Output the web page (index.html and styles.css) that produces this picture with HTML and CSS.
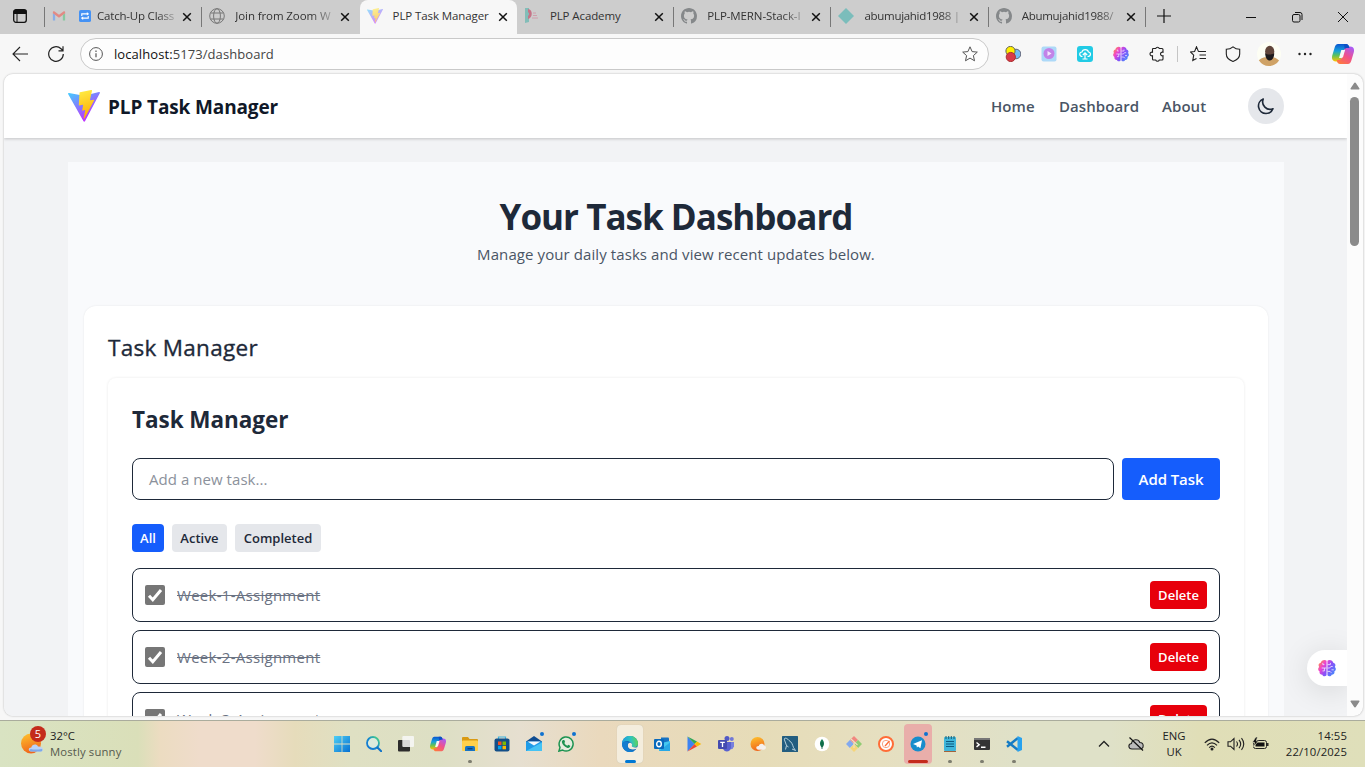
FILE: index.html
```html
<!DOCTYPE html>
<html lang="en">
<head>
<meta charset="utf-8">
<title>PLP Task Manager</title>
<link rel="stylesheet" href="styles.css">
</head>
<body>
<svg class="defs" aria-hidden="true">
  <defs>
    <linearGradient id="viteA" x1="0" y1="0" x2="0.6" y2="0.9"><stop offset="0" stop-color="#41d1ff"/><stop offset="1" stop-color="#bd34fe"/></linearGradient>
    <linearGradient id="viteB" x1="0.4" y1="0" x2="0.6" y2="1"><stop offset="0" stop-color="#ffea40"/><stop offset="0.2" stop-color="#ffdd35"/><stop offset="1" stop-color="#ffa800"/></linearGradient>
    <linearGradient id="brainG" gradientUnits="userSpaceOnUse" x1="1" y1="2" x2="15" y2="12"><stop offset="0" stop-color="#ff9147"/><stop offset="0.3" stop-color="#ee42cf"/><stop offset="0.6" stop-color="#8a50f8"/><stop offset="1" stop-color="#4a86fb"/></linearGradient>
    <linearGradient id="copA" x1="0.4" y1="0" x2="0.4" y2="1"><stop offset="0" stop-color="#0a55d0"/><stop offset="0.4" stop-color="#16a2dc"/><stop offset="0.65" stop-color="#5cc25c"/><stop offset="1" stop-color="#ffc400"/></linearGradient>
    <linearGradient id="copB" x1="0.8" y1="0" x2="0.2" y2="1"><stop offset="0" stop-color="#a85cf8"/><stop offset="0.5" stop-color="#f0508c"/><stop offset="1" stop-color="#ff7a3c"/></linearGradient>
    <linearGradient id="edgeA" x1="0" y1="0.4" x2="1" y2="0.3"><stop offset="0" stop-color="#1b9de2"/><stop offset="0.55" stop-color="#2fc2c0"/><stop offset="1" stop-color="#62d650"/></linearGradient>
    <linearGradient id="winG" x1="0" y1="0" x2="1" y2="1"><stop offset="0" stop-color="#4fd0f5"/><stop offset="1" stop-color="#0670d2"/></linearGradient>
    <linearGradient id="sunG" x1="0" y1="0" x2="0.3" y2="1"><stop offset="0" stop-color="#ffc52e"/><stop offset="1" stop-color="#f0681c"/></linearGradient>
    <linearGradient id="seaG" x1="0" y1="1" x2="1" y2="0"><stop offset="0" stop-color="#1173d4"/><stop offset="0.5" stop-color="#1489cf"/><stop offset="1" stop-color="#54dc7c"/></linearGradient>
    <symbol id="vite" viewBox="0 0 32 32"><path d="M31.9 3.1 17 31.2c-.3.6-1.200.6-1.500 0L.1 4.100c-.4-.6.2-1.300.9-1.200L16 5.700 31 2.100c.7-.1 1.200.5.9 1z" fill="url(#viteA)"/><path d="M23.200.1 11.900 2.300a.5.5 0 0 0-.4.4l-.7 12.400c0 .3.300.5.600.4l3.200-.7c.3-.1.600.2.500.5l-.9 4.900c-.1.300.200.600.5.500l2-.6c.3-.1.600.2.500.5l-1.500 7.500c-.1.500.5.700.8.400L26.200 10.300c.2-.3-.1-.7-.4-.6l-3.300.6c-.3.100-.6-.2-.5-.5L24 .7c.1-.3-.4-.7-.8-.6z" fill="url(#viteB)"/></symbol>
    <symbol id="github" viewBox="0 0 16 16"><path fill="#85888a" d="M8 0C3.580 0 0 3.580 0 8c0 3.540 2.290 6.530 5.470 7.590.4.070.550-.170.550-.380v-1.490c-2.230.480-2.700-.950-2.700-.950-.360-.920-.890-1.170-.890-1.170-.730-.500.060-.490.060-.490.800.060 1.230.830 1.230.830.720 1.210 1.870.870 2.330.660.070-.520.280-.870.510-1.070-1.780-.200-3.640-.890-3.640-3.950 0-.870.310-1.590.820-2.150-.080-.200-.360-1.020.080-2.120 0 0 .670-.210 2.200.820a7.700 7.700 0 0 1 4 0c1.530-1.040 2.200-.820 2.200-.820.440 1.100.160 1.920.080 2.120.510.560.820 1.270.820 2.150 0 3.070-1.870 3.750-3.650 3.950.290.250.540.730.540 1.480v2.200c0 .210.150.460.550.380A8 8 0 0 0 16 8c0-4.420-3.580-8-8-8z"/></symbol>
    <symbol id="close" viewBox="0 0 10 10"><path d="M1.200 1.200 8.800 8.800M8.800 1.200 1.200 8.800" stroke="#111" stroke-width="1.500" fill="none"/></symbol>
    <symbol id="brain" viewBox="0 0 16 16"><path fill="url(#brainG)" d="M7.600 1.500v13c-1.300 1.400-3.300.900-3.700-.6C2 14 .9 12.500 1.500 11-.1 10.200-.3 8 1 7-.1 5.500.8 3.700 2.500 3.400 2.600 1.200 6 0 7.600 1.500zM8.400 1.500v13c1.300 1.400 3.300.9 3.700-.6 1.900.1 3-1.400 2.400-2.900 1.600-.8 1.800-3 .5-4 1.100-1.500.2-3.300-1.500-3.600C13.400 1.200 10 0 8.400 1.500z"/><path d="M7.600 8H3.300M5.700 8v2.600H4M5.700 5H4.300V3.500M8.400 5H11V3.500M8.400 11h2.300l1.200 1.300M8.400 8h2l1-1.300h1.700M12 9.600h2" stroke="#ecdcff" stroke-width=".8" fill="none"/></symbol>
    <symbol id="copilot" viewBox="0 0 22 20"><path fill="url(#copA)" d="M6 0h8c1.600 0 2.500.9 3 2.500l.5 1.500h-2.200c-2 0-2.900 1-3.500 3L9.300 15c-.5 1.600-1.600 2.500-3.200 2.500H4c-3.500 0-4.800-2.500-3.600-6.500L2.500 4C3.200 1.500 4.300 0 6 0z"/><path fill="url(#copB)" d="M16 20H8c-1.600 0-2.500-.9-3-2.500L4.700 16h1.800c2 0 2.900-1 3.500-3l2.500-8c.5-1.600 1.600-2.500 3.200-2.500H18c3.500 0 4.800 2.500 3.600 6.500L19.500 16c-.7 2.500-1.800 4-3.500 4z"/><path fill="#0d4fc4" d="M12 0h2c1.600 0 2.500.9 3 2.500L17.500 4h-2.200c-1.200 0-2 .5-2.600 1.300z"/><path fill="#f7f7f7" d="M9.300 6h3.800l-1.900 6.500q-.5 1.500-2 1.500H7z"/></symbol>
  </defs>
</svg>

<div class="browser">
  <div class="tabstrip">
    <div class="workspaces"><svg width="14" height="14" viewBox="0 0 14 14"><rect x=".7" y=".7" width="12.600" height="12.600" rx="2.200" fill="none" stroke="#111" stroke-width="1.300"/><path d="M1 1.500h12v3H1zM4 4v9" fill="#111" stroke="#111"/></svg></div>
    <div class="tab first">
      <svg class="fav" viewBox="0 0 16 16"><path d="M1 13V4.500l2.600 2V13z" fill="#88aee8"/><path d="M15 13V4.500l-2.600 2V13z" fill="#87c8a0"/><path d="M1 4.800V3.600C1 2.500 2.300 2.200 3 2.800l5 3.800 5-3.800c.8-.6 2-.2 2 .8v1.200L8 10z" fill="#e28a84"/></svg>
      <svg class="fav blue" viewBox="0 0 13 13"><rect width="13" height="13" rx="2" fill="#4592f4"/><path d="M3 6.500V4.200h6.500M10 6.500v2.300H3.500" fill="none" stroke="#fff" stroke-width="1.200"/><path d="M8.500 2.300 11 4.200 8.500 6zM4.500 7 2 8.800l2.500 1.900z" fill="#fff"/></svg>
      <span class="title fade">Catch-Up Class</span><svg class="x"><use href="#close"/></svg>
    </div>
    <div class="tab">
      <svg class="fav" viewBox="0 0 16 16"><g fill="none" stroke="#777"><circle cx="8" cy="8" r="7.300"/><ellipse cx="8" cy="8" rx="3.400" ry="7.300"/><path d="M1.500 5h13M1.500 11h13"/></g></svg>
      <span class="title fade">Join from Zoom W</span><svg class="x"><use href="#close"/></svg>
    </div>
    <div class="tab active">
      <svg class="fav dim" viewBox="0 0 16 16"><use href="#vite"/></svg>
      <span class="title">PLP Task Manager</span><svg class="x"><use href="#close"/></svg>
    </div>
    <div class="tab">
      <svg class="fav" viewBox="0 0 16 16"><path d="M1 0h4v14l-4 1z" fill="#82bdb8"/><path d="M4 1c5 0 5 9 0 10V8c1.500-1 1.500-3 0-4z" fill="#c67387"/><path d="M9 5h3M9 7.500h4M8 10h6" stroke="#cf9eac" stroke-width="1"/></svg>
      <span class="title">PLP Academy</span><svg class="x"><use href="#close"/></svg>
    </div>
    <div class="tab">
      <svg class="fav"><use href="#github"/></svg>
      <span class="title fade">PLP-MERN-Stack-I</span><svg class="x"><use href="#close"/></svg>
    </div>
    <div class="tab">
      <svg class="fav" viewBox="0 0 16 16"><path d="m8 0 8 8-8 8-8-8z" fill="#7bbdbb"/></svg>
      <span class="title fade snug">abumujahid1988 |</span><svg class="x"><use href="#close"/></svg>
    </div>
    <div class="tab">
      <svg class="fav"><use href="#github"/></svg>
      <span class="title fade snug">Abumujahid1988/</span><svg class="x"><use href="#close"/></svg>
    </div>
    <div class="tabend"></div>
    <svg class="newtab" viewBox="0 0 14 14"><path d="M7 0v14M0 7h14" stroke="#111" stroke-width="1.200"/></svg>
    <div class="winctl">
      <svg viewBox="0 0 12 12"><path d="M1 6.500h10" stroke="#111"/></svg>
      <svg viewBox="0 0 12 12"><rect x="1.500" y="3.500" width="7.500" height="7.500" rx="1.500" fill="none" stroke="#111"/><path d="M4 1.500h5q2 0 2 2V9" fill="none" stroke="#111"/></svg>
      <svg viewBox="0 0 12 12"><path d="m1 1 10 10M11 1 1 11" stroke="#111"/></svg>
    </div>
  </div>

  <div class="toolbar">
    <svg class="back" viewBox="0 0 16 16"><path d="M16 8H1M8 1 1 8l7 7" fill="none" stroke="#222" stroke-width="1.100"/></svg>
    <svg class="reload" viewBox="0 0 16 16"><path d="M15.300 8A7.300 7.300 0 1 1 13 2.700l2 1.800M15 .3v4.500h-4.500" fill="none" stroke="#222" stroke-width="1.200"/></svg>
    <div class="address">
      <svg class="info" viewBox="0 0 14 14"><circle cx="7" cy="7" r="6.400" fill="none" stroke="#555"/><path d="M7 6.200v4M7 3.600V5" stroke="#555" stroke-width="1.200"/></svg>
      <span class="url"><b>localhost:</b>5173/dashboard</span>
      <svg class="star" viewBox="0 0 16 16"><path d="m8 .8 2.100 4.800 5.200.5-3.900 3.500 1.100 5.200L8 12.100l-4.500 2.700 1.100-5.200L.7 6.100l5.200-.5z" fill="none" stroke="#555" stroke-linejoin="round"/></svg>
    </div>
    <div class="exts">
      <svg viewBox="0 0 16 16"><circle cx="11" cy="8" r="4.800" fill="#72bdf5" stroke="#667"/><circle cx="5.500" cy="5" r="4.600" fill="#ffee00" stroke="#665"/><circle cx="5.800" cy="11" r="4.600" fill="#d83a48" stroke="#a33"/></svg>
      <svg viewBox="0 0 16 16"><rect x=".5" y=".5" width="15" height="15" rx="2" fill="#add9f8"/><circle cx="8" cy="7.500" r="5.500" fill="#c283e8"/><path d="m6.500 5 4 2.500-4 2.500z" fill="#f4e6ff"/></svg>
      <svg viewBox="0 0 16 16"><rect width="16" height="16" rx="3" fill="#22cbe5"/><path d="M5.500 10.500C1.800 10.500 2 6 5 6c.5-3.300 6-3.300 6.400 0 3 .2 2.800 4.500-.9 4.500M8 13V6.800M5.800 9 8 6.800 10.200 9M5.500 13h5" fill="none" stroke="#fff" stroke-width="1.200"/></svg>
      <svg><use href="#brain"/></svg>
      <svg viewBox="0 0 16 16"><path d="M4 2.500h2.700a1.900 1.900 0 0 1 3.600 0H13q1 0 1 1v2.700a1.900 1.900 0 1 0 0 3.600V13q0 1-1 1h-2.700a1.900 1.900 0 0 1-3.600 0H4.500q-1 0-1-1V9.800a1.900 1.900 0 1 1 0-3.600V3z" fill="none" stroke="#222" stroke-width="1.100"/></svg>
    </div>
    <i class="divider"></i>
    <div class="tools">
      <svg viewBox="0 0 16 16"><path d="M8.500 5.600 6.500.8 4.600 5.500.5 5.900l3.200 3.300-.9 5.200 3.700-2M8.500 5.500H16M9.500 9H16M9.500 12.500H16" fill="none" stroke="#222" stroke-width="1.100"/></svg>
      <svg viewBox="0 0 16 16"><path d="M8 .8C6 2.500 3.700 3.200 1.300 3.200V8c0 3.500 2.700 6 6.700 7.400 4-1.400 6.700-3.900 6.700-7.400V3.200C12.300 3.200 10 2.500 8 .8z" fill="none" stroke="#222" stroke-width="1.100"/></svg>
      <svg class="avatar" viewBox="0 0 24 24"><circle cx="12" cy="12" r="12" fill="#fdfef4"/><path d="M1.800 18.300C5 15.500 8 15 12.500 15s7 1 9.600 3.500a12 12 0 0 1-20.300-.2z" fill="#cfa266"/><ellipse cx="12.700" cy="9.500" rx="4.600" ry="5.800" fill="#60453a"/><path d="M8.200 11c1 2 8 2 9 0 0 10-9 10-9 0z" fill="#1e1b1c"/></svg>
      <svg viewBox="0 0 16 16"><g fill="#222"><circle cx="2.500" cy="8" r="1.200"/><circle cx="8" cy="8" r="1.200"/><circle cx="13.500" cy="8" r="1.200"/></g></svg>
      <svg class="cop"><use href="#copilot"/></svg>
    </div>
  </div>

  <div class="viewport">
    <div class="page">
      <header class="nav">
        <div class="brand"><svg class="logo"><use href="#vite"/></svg><span class="brandname">PLP Task Manager</span></div>
        <nav class="links"><a class="l1">Home</a><a class="l2">Dashboard</a><a class="l3">About</a>
          <button class="theme"><svg viewBox="0 0 24 24"><path d="M20.350 15.350A9 9 0 0 1 8.650 3.650 9 9 0 0 0 12 21a9 9 0 0 0 8.350-5.650z" fill="none" stroke="#1e2939" stroke-width="2" stroke-linejoin="round"/></svg></button></nav>
      </header>
      <main class="panel">
        <h1>Your Task Dashboard</h1>
        <p class="lead">Manage your daily tasks and view recent updates below.</p>
        <section class="card">
          <h2>Task Manager</h2>
          <div class="inner">
            <h3>Task Manager</h3>
            <div class="addrow"><div class="field"><span>Add a new task...</span></div><button class="add"><span>Add Task</span></button></div>
            <div class="filters"><button class="on f1">All</button><button class="f2">Active</button><button class="f3">Completed</button></div>
            <ul class="tasks">
              <li><i class="check"><svg viewBox="0 0 20 20"><path d="m4 10.700 3.800 4L16 5" fill="none" stroke="#fff" stroke-width="3"/></svg></i><s>Week-1-Assignment</s><button class="del">Delete</button></li>
              <li><i class="check"><svg viewBox="0 0 20 20"><path d="m4 10.700 3.800 4L16 5" fill="none" stroke="#fff" stroke-width="3"/></svg></i><s>Week-2-Assignment</s><button class="del">Delete</button></li>
              <li><i class="check"><svg viewBox="0 0 20 20"><path d="m4 10.700 3.800 4L16 5" fill="none" stroke="#fff" stroke-width="3"/></svg></i><s>Week-3-Assignment</s><button class="del">Delete</button></li>
            </ul>
          </div>
        </section>
      </main>
      <div class="float"><svg><use href="#brain"/></svg></div>
    </div>
    <div class="scrollbar">
      <svg viewBox="0 0 10 8"><path d="M5 .5q.6 0 1 .7L9.500 6.500q.2 1-.8 1H1.300q-1 0-.8-1L4 1.200q.4-.7 1-.7z" fill="#8b8b8b"/></svg>
      <i class="thumb"></i>
      <svg class="down" viewBox="0 0 10 8"><path d="M5 7.500q.6 0 1-.7L9.500 1.500q.2-1-.8-1H1.300q-1 0-.8 1L4 6.800q.4.700 1 .7z" fill="#8b8b8b"/></svg>
    </div>
  </div>
</div>

<div class="taskbar">
  <div class="weather">
    <div class="sun"><svg viewBox="0 0 24 22"><circle cx="10" cy="10.500" r="10" fill="url(#sunG)"/><path d="M10 18.500c-3-.3-3-4 .3-4 .5-3.500 5.500-4 6.700-1 5-1 6.500 4.500 3 5z" fill="#b9d2f8"/><path d="M10 18.500c-2-.3-2-2 0-2.500 3 1 7 .5 11 0 .8 1.200.2 2.300-1 2.500z" fill="#7ea9ea"/></svg><b class="count">5</b></div>
    <div class="wtext"><span class="temp">32°C</span><span class="cond">Mostly sunny</span></div>
  </div>
  <div class="apps">
    <div class="app"><svg viewBox="0 0 16 16"><path d="M0 0h7.600v7.600H0zM8.400 0H16v7.600H8.400zM0 8.400h7.600V16H0zM8.400 8.400H16V16H8.400z" fill="url(#winG)"/></svg></div>
    <div class="app"><svg viewBox="0 0 16 16"><circle cx="7" cy="7" r="6" fill="#dcebdc" stroke="url(#seaG)" stroke-width="1.800"/><path d="m11.500 11.500 3.700 3.700" stroke="#1173c8" stroke-width="2" stroke-linecap="round"/></svg></div>
    <div class="app"><svg viewBox="0 0 16 16"><rect x="0" y="4" width="12" height="11.500" rx="1" fill="#2c2c2c"/><rect x="4.300" y="0" width="11.700" height="11" rx="1" fill="#f8f8f8" opacity=".85"/></svg></div>
    <div class="app"><svg><use href="#copilot"/></svg></div>
    <div class="app run"><svg viewBox="0 0 16 16"><path d="M0 2q0-1 1-1h5l1.500 2H15q1 0 1 1v3H0z" fill="#d99a12"/><rect y="4.500" width="16" height="10.500" rx="1" fill="#ffd04c"/><path d="M3 15v-3.500q0-1.500 1.500-1.500h7q1.500 0 1.500 1.500V15z" fill="#1673c4"/><path d="M5.500 12.700h5" stroke="#0a3f7e" stroke-width="1.200"/></svg></div>
    <div class="app"><svg viewBox="0 0 16 16"><path d="M4.500 3V1h7v2" fill="none" stroke="#3ab2df" stroke-width="1.200"/><rect x=".5" y="2.500" width="15" height="13" rx="2" fill="#134f88"/><path d="M4 5.500h3.500V9H4z" fill="#f25022"/><path d="M8.500 5.500H12V9H8.500z" fill="#7fba00"/><path d="M4 9.800h3.500v3.500H4z" fill="#00a4ef"/><path d="M8.500 9.800H12v3.500H8.500z" fill="#ffb900"/></svg></div>
    <div class="app dot"><svg viewBox="0 0 16 16"><path d="M0 5.500 8 0l8 5.500v1H0z" fill="#0e4c91"/><path d="M0 5.500h16V15H0z" fill="#1e9be8"/><path d="M1.500 5.500h13L8 9.500z" fill="#f2f8fd"/><path d="M0 15 16 6.500V15z" fill="#45c3f4"/></svg></div>
    <div class="app dot"><svg viewBox="0 0 16 16"><path d="M.9 15.100 2 11.400a7 7 0 1 1 2.700 2.700z" fill="#e4ecdd" stroke="#1c9351" stroke-width="1.500"/><path d="M5 3.900 6.300 4l.8 2-.8 1q1 2 3 2.800l1-1 1.900 1c.2 2-1.800 2.400-3.200 1.900C6.500 10.800 4.400 8.700 3.900 6.200c-.1-1 .3-1.900 1.100-2.300z" fill="#1c9351"/></svg></div>
    <div class="app"></div>
    <div class="app current"><svg viewBox="0 0 16 16"><circle cx="8" cy="8" r="8" fill="#1368b8"/><path d="M0 8a8 8 0 0 1 16-.5c0 3-2.500 4.200-5.200 3.500-1.700-.5-1-1.200-.7-2.200C10.500 6 3 2.500 0 8z" fill="url(#edgeA)"/><path d="M6.300 7.500c-2 4 2 7.500 8.500 5.200q1-1 1-2c-2 1.300-4 .8-5 .3-1.700-.8-.6-1.500-.7-2.500-.3-2-3-2.500-3.800-1z" fill="#f1ebdc"/><path d="M6 7.500c-1.700 4.500 2 7.500 6.800 7A8 8 0 0 1 0 8c1.500-3.500 4.800-3 7-1.300z" fill="#137dd0"/></svg></div>
    <div class="app"><svg viewBox="0 0 16 16"><path d="M7 1.500h7q1 0 1 1V9H7z" fill="#1773c4"/><path d="M5 7.500 16 5v9q0 1-1 1H5z" fill="#43c8f1"/><path d="m5 15 11-8.500V15z" fill="#28a8e6"/><rect y="3" width="10" height="10" rx="1" fill="#0869bc"/><ellipse cx="5" cy="8" rx="2.300" ry="2.700" fill="none" stroke="#fff" stroke-width="1.400"/></svg></div>
    <div class="app"><svg viewBox="0 0 16 16"><path d="M1.500.5 8.500 8l-7 7.500z" fill="#3e83f1"/><path d="m1.500.5 9.500 5L8.500 8z" fill="#2ea657"/><path d="m1.500 15.500 9.500-5L8.500 8z" fill="#ec4539"/><path d="M11 5.500 15.300 8 11 10.500 8.500 8z" fill="#fbbb05"/></svg></div>
    <div class="app"><svg viewBox="0 0 16 16"><circle cx="13.800" cy="3" r="2" fill="#7178d6"/><circle cx="9" cy="2.500" r="2.500" fill="#5159c5"/><path d="M11 6h5v4.500q-1 3.500-5 2.500z" fill="#7780dd"/><path d="M5 6h8v5.500c-.5 5-7 5-8 1z" fill="#5961cf"/><rect y="4" width="9" height="9" rx="1" fill="#444bb0"/><path d="M2.200 6.300h4.600M4.500 6.300V11" stroke="#fff" stroke-width="1.300"/></svg></div>
    <div class="app"><svg viewBox="0 0 16 16"><circle cx="7.500" cy="8" r="7" fill="url(#sunG)"/><path d="M8.500 13.800c-3-.3-3-4 .3-3.800.7-3 4.700-2.800 5.200-.5 2.800.2 2.500 4.300-.5 4.300z" fill="#f4f0ee"/></svg></div>
    <div class="app"><svg viewBox="0 0 16 16"><rect width="16" height="16" rx=".5" fill="#225d80"/><path d="m3.500 13.500 1-4-2-5.500C1.500 1.500 5 1.500 7 4.500c3 1.500 3.500 4.500 4.500 7l2 3-3.500-1.500M4.500 9.500l2 1.500" fill="none" stroke="#c6dce7" stroke-width=".9"/></svg></div>
    <div class="app"><svg viewBox="0 0 16 16"><circle cx="8" cy="8" r="7.300" fill="#fff"/><path d="M8 3c2.700 3.200 2.700 6.300 0 8.500-2.700-2.200-2.700-5.300 0-8.500z" fill="#147850"/><path d="M8 6v7" stroke="#0d5840" stroke-width=".8"/></svg></div>
    <div class="app"><svg viewBox="0 0 16 16"><path d="m3.900 4.100 4.100-4.100 4 4-4 4z" fill="#f18780"/><path d="M0 8l3.900-3.900L7.800 8l-3.900 3.900z" fill="#82a9ef"/><path d="m8.200 8 3.900-3.900L16 8l-3.900 3.900z" fill="#90cb73"/><path d="m4.100 12 3.900-3.800 4 3.900L8 16z" fill="#f6d579"/><path d="m5 3 6.500 6M8 5.500V12" stroke="#eee0c3" stroke-width="1.100"/></svg></div>
    <div class="app"><svg viewBox="0 0 16 16"><circle cx="8" cy="8" r="7" fill="#fff" stroke="#ff6c37" stroke-width="2"/><circle cx="8" cy="8" r="3.700" fill="none" stroke="#f7a184" stroke-width="1"/><path d="m6.500 9.500 4.500-5 1 1-4.500 5z" fill="#ff6c37"/></svg></div>
    <div class="app alert dot"><svg viewBox="0 0 16 16"><circle cx="8" cy="8" r="7.500" fill="#188dcc"/><path d="m3 8 9-3.700-1.600 7.900-2.300-1.800-1.200 1.200-.3-2.200z" fill="#fff"/></svg></div>
    <div class="app run"><svg viewBox="0 0 16 16"><rect x="2" y="1" width="12" height="14" rx="1" fill="#3fb6da"/><path d="M4 5.500h8M4 8h8M4 10.500h8" stroke="#0d5b81"/><path d="M4 0v3M6.700 0v3M9.300 0v3M12 0v3" stroke="#195e73"/><path d="M2 15.500h12" stroke="#a3633b"/></svg></div>
    <div class="app run"><svg viewBox="0 0 16 16"><rect y="2" width="16" height="12" rx="1" fill="#343434"/><path d="M0 2h16v2H0z" fill="#777"/><path d="m2.500 6.500 2.700 2.200-2.700 2.200M7 11.300h4.500" fill="none" stroke="#fff" stroke-width="1.400"/></svg></div>
    <div class="app run"><svg viewBox="0 0 16 16"><path d="M1 5.200 12 14M1 10.800 12 2" stroke="#147bc4" stroke-width="2.500"/><path d="M11.500 0 16 2v12l-4.500 2z" fill="#27a2ef"/></svg></div>
  </div>
  <div class="tray">
    <svg class="chev" viewBox="0 0 12 8"><path d="m1 6.500 5-5 5 5" fill="none" stroke="#222" stroke-width="1.300"/></svg>
    <svg class="cloud" viewBox="0 0 16 14"><path d="M4 12C.2 12-.3 7 3.500 6.500 4 2 10.500 1.500 11.800 5.500c4.500 0 4.500 6.500 0 6.500z" fill="#bbb" stroke="#222" stroke-width="1.100"/><path d="m1.500.5 13.500 13" stroke="#111" stroke-width="1.200"/></svg>
    <div class="lang">ENG<br>UK</div>
    <svg class="wifi" viewBox="0 0 16 14"><g fill="none" stroke="#222" stroke-width="1.200"><path d="M.8 5.800q7.200-7.500 14.400 0M3 8.300q5-5 10 0M5.200 10.600q2.800-3 5.600 0"/></g><circle cx="8" cy="12" r="1.500" fill="#222"/></svg>
    <svg class="sound" viewBox="0 0 18 14"><g fill="none" stroke="#222" stroke-width="1.100"><path d="M1 4.800h2.500L7 1.500v11L3.500 9.200H1zM9.500 4.500q2 2.500 0 5M12 2.800q3.400 4.200 0 8.400M14.500 1.200q4.500 5.800 0 11.600"/></g></svg>
    <svg class="battery" viewBox="0 0 17 14"><rect x="1.500" y="3.500" width="13" height="8" rx="2" fill="none" stroke="#222"/><rect x="3.500" y="5.500" width="9" height="4" fill="#111"/><path d="M15.800 6v3" stroke="#111" stroke-width="1.300"/><path d="M3.800 0 .3 5.500h2.200L1.500 9.500 6.500 4H4.300L5.500 0z" fill="#111" stroke="#dfdfbf" stroke-width=".7"/></svg>
    <div class="clock"><span class="time">14:55</span><span class="date">22/10/2025</span></div>
  </div>
</div>
</body>
</html>
```
FILE: styles.css
```css
* { box-sizing: border-box; }
body { margin: 0; width: 1365px; height: 767px; overflow: hidden; background: #f7f7f7; font-family: "Open Sans", "Noto Sans", sans-serif; font-size: 15px; color: #1e2939; display: flex; flex-direction: column; }
button { font: inherit; border: 0; padding: 0; color: inherit; white-space: nowrap; }
svg { display: block; flex: none; }
.defs { position: absolute; width: 0; height: 0; }
.browser { height: 720px; display: flex; flex-direction: column; }

.tabstrip { height: 34px; flex: none; display: flex; align-items: center; background: #cdcdcd; }
.workspaces { width: 44px; padding: 0 0 2px 13px; }
.tab { width: 157.300px; height: 34px; flex: none; display: flex; align-items: center; padding: 0 9px 2px 8px; position: relative; }
.tab::before, .tabend { content: ""; position: absolute; left: 0; top: 7px; width: 1px; height: 20px; background: #777; }
.tabend { position: static; margin-bottom: 0; }
.tab.active::before, .tab.active + .tab::before { display: none; }
.tab.active { background: #f7f7f7; border-radius: 8px 8px 0 0; z-index: 1; margin: 0 -1px 0 1px; padding-left: 7px; }
.fav { width: 16px; height: 16px; margin-right: 10px; }
.tab.first .fav { width: 14px; height: 14px; margin: 0 13px 0 0; }
.tab.first .fav.blue { width: 12px; height: 12px; margin: 0 6px 0 0; }
.dim { opacity: .55; }
.title { flex: 1; min-width: 0; white-space: nowrap; font-size: 11.500px; letter-spacing: -.1px; color: #333; line-height: 16px; }
.snug { letter-spacing: -.3px; }
.first .title { letter-spacing: -.2px; }
.fade { -webkit-mask-image: linear-gradient(to right, #000 76%, transparent 104%); mask-image: linear-gradient(to right, #000 76%, transparent 104%); }
.x { width: 10px; height: 10px; margin-left: 5px; position: relative; top: 1px; }
.newtab { width: 14px; height: 14px; margin: 0 0 3px 11px; }
.winctl { margin-left: auto; display: flex; gap: 34px; padding-right: 16px; }
.winctl svg { width: 12px; height: 12px; }

.toolbar { height: 40px; flex: none; display: flex; align-items: center; padding: 0 9px 0 12px; }
.back, .reload { width: 16px; height: 16px; }
.reload { margin-left: 20px; }
.address { width: 909px; height: 32px; margin-left: 16px; border: 1px solid #c9c9c9; border-radius: 16px; background: #fdfdfd; display: flex; align-items: center; padding: 0 10px 0 8px; }
.info { width: 14px; height: 14px; margin-right: 11px; }
.url { flex: 1; font-size: 13px; color: #444; letter-spacing: .08px; }
.url b { font-weight: 400; color: #111; }
.star { width: 16px; height: 16px; }
.exts { display: flex; gap: 20px; margin-left: 16px; }
.exts svg { width: 16px; height: 16px; }
.divider { width: 1px; height: 16px; background: #c5c5c5; margin: 0 12px 0 12px; }
.tools { display: flex; align-items: center; gap: 20px; margin-left: 0; }
.tools svg { width: 16px; height: 16px; }
.tools svg:nth-child(2) { margin-left: -1px; }
.tools .avatar { width: 24px; height: 24px; margin: 0 -4px 0 -4px; }
.tools .cop { width: 22px; height: 20px; margin-left: -1px; }

.viewport { height: 642px; flex: none; margin: 0 2px 0 4px; border-radius: 9px; overflow: hidden; display: flex; background: #fcfcfc; box-shadow: 0 0 2px #aaa; }
.page { width: 1343px; flex: none; height: 642px; overflow: hidden; background: #f2f3f5; position: relative; }
.nav { height: 64px; padding: 0 63px 0 64px; background: #fff; display: flex; align-items: center; justify-content: space-between; box-shadow: 0 1px 3px rgba(0,0,0,.2); }
.brand { display: flex; align-items: center; gap: 8px; }
.logo { width: 32px; height: 32px; }
.brandname { font-size: 19px; font-weight: 700; letter-spacing: -.13px; color: #101828; padding-top: 1px; }
.links { display: flex; align-items: center; font-size: 15px; letter-spacing: .06px; font-weight: 600; color: #4a5565; }
.l1 { width: 68px; } .l2 { width: 103px; } .l3 { width: 86px; }
.theme { width: 36px; height: 36px; border-radius: 50%; background: #e5e7eb; display: grid; place-items: center; }
.theme svg { width: 20px; height: 20px; }
.panel { width: 1216px; margin: 24px 0 0 64px; padding: 31px 16px 0; height: 900px; background: #f9fafc; }
h1 { margin: 0; font-size: 35px; line-height: 48px; font-weight: 700; text-align: center; letter-spacing: -.98px; }
.lead { margin: 1px 0 0; text-align: center; font-size: 15px; line-height: 24px; color: #4a5565; letter-spacing: .09px; }
.card { margin-top: 40px; height: 800px; background: #fff; border-radius: 12px; padding: 25px 24px; box-shadow: 0 0 2px rgba(0,0,0,.09); }
h2 { margin: 0 0 13px; font-size: 22.500px; line-height: 34px; font-weight: 500; letter-spacing: .3px; -webkit-text-stroke: .35px #1e2939; }
.inner { height: 700px; border-radius: 8px; padding: 24px; box-shadow: 0 0 3px rgba(0,0,0,.09); }
h3 { margin: 0; font-size: 22.500px; line-height: 36px; font-weight: 700; letter-spacing: -.05px; }
.addrow { display: flex; gap: 8px; margin-top: 20px; }
.field { width: 982px; height: 42px; border: 1px solid #1e2939; border-radius: 8px; padding: 0 16px; line-height: 41px; color: #8b919b; font-size: 15px; letter-spacing: .05px; }
.add { width: 98px; height: 42px; border-radius: 4px; background: #155dfc; color: #fff; font-weight: 600; font-size: 15px; letter-spacing: -.1px; }
.filters { display: flex; gap: 8px; margin-top: 24px; }
.filters button { height: 28px; border-radius: 4px; background: #e5e7eb; font-size: 13px; font-weight: 600; }
.filters .on { background: #155dfc; color: #fff; }
.f1 { width: 32px; } .f2 { width: 55px; } .f3 { width: 86px; }
.tasks { list-style: none; margin: 16px 0 0; padding: 0; display: flex; flex-direction: column; gap: 8px; }
.tasks li { height: 54px; border: 1px solid #1e2939; border-radius: 8px; padding: 0 12px; display: flex; align-items: center; }
.check { width: 20px; height: 20px; border-radius: 2px; background: #767676; margin-right: 12px; }
.tasks s { flex: 1; color: #6a7282; font-size: 15px; letter-spacing: .28px; }
.del { width: 57px; height: 28px; border-radius: 4px; background: #e7000b; color: #fff; font-size: 13px; font-weight: 600; }
.float { position: absolute; right: 0; top: 576px; width: 40px; height: 36px; border-radius: 18px 0 0 18px; background: #fff; box-shadow: 0 4px 30px rgba(0,0,0,.12); padding: 9px 0 0 11px; }
.float svg { width: 18px; height: 18px; }
.scrollbar { width: 16px; padding: 8px 0 8px 3px; display: flex; flex-direction: column; }
.scrollbar svg { width: 10px; height: 8px; }
.thumb { width: 9px; height: 149px; border-radius: 5px; background: #8b8b8b; margin-top: 7px; }
.scrollbar .down { margin-top: auto; }

.taskbar { height: 47px; border-top: 1px solid #aaac9d; display: flex; position: relative; background: linear-gradient(90deg, #d9e3c2 0, #dadfb9 138px, #ecdcc1 160px, #efdccb 200px, #efdccb 255px, #e6dcbb 295px, #dfe0c3 350px, #dddfc4 440px, #e6dfd0 520px, #ead9bd 600px, #e6dcb8 760px, #e6dfc0 880px, #dfe1c8 1020px, #dfe1c8 1110px, #e0deb7 1200px, #dfdfba 1365px); }
.weather { width: 326px; display: flex; padding-left: 21px; }
.sun { position: relative; width: 29px; padding-top: 12px; }
.sun svg { width: 24px; height: 22px; }
.count { position: absolute; left: 9px; top: 5px; width: 16px; height: 16px; border-radius: 50%; background: #c42b1c; color: #fff; font-size: 11px; line-height: 16px; font-weight: 400; text-align: center; }
.wtext { display: flex; flex-direction: column; padding-top: 7px; font-size: 11.300px; line-height: 16px; color: #222; letter-spacing: 0; }
.cond { color: #55594d; letter-spacing: .15px; }
.apps { display: flex; }
.app { width: 32px; height: 46px; display: grid; place-items: center; position: relative; z-index: 0; }
.app svg { width: 16px; height: 16px; position: relative; }
.run::after { content: ""; position: absolute; left: 14px; top: 39px; width: 4px; height: 3px; border-radius: 2px; background: #7d7d70; }
.dot::before { content: ""; position: absolute; left: 22px; top: 11px; width: 4px; height: 4px; border-radius: 50%; background: #0f72d0; z-index: 2; }
.current { width: 26px; height: 38px; margin: 4px 3px; border-radius: 4px; background: #f4eddd; box-shadow: 0 0 1px #bba; }
.current::after { content: ""; position: absolute; left: 8px; top: 35px; width: 11px; height: 3px; border-radius: 2px; background: #0078d4; }
.alert { width: 28px; height: 40px; margin: 3px 2px; border-radius: 4px; background: #e9aeaa; }
.alert::before { left: 20px; top: 8px; }
.alert::after { content: ""; position: absolute; left: 4px; top: 36px; width: 20px; height: 3px; border-radius: 2px; background: #c42b1c; }
.tray { flex: 1; display: flex; align-items: center; padding: 0 18px 0 68px; font-size: 11.300px; line-height: 16px; color: #222; }
.chev { width: 12px; height: 8px; }
.cloud { width: 16px; height: 14px; margin-left: 18px; position: relative; }
.chev + .cloud { margin-left: 18px; }
.lang { width: 34px; text-align: center; margin-left: 13px; }
.wifi { width: 16px; height: 14px; margin-left: 13px; }
.sound { width: 18px; height: 14px; margin-left: 7px; }
.battery { width: 17px; height: 14px; margin-left: 7px; }
.clock { flex: 1; display: flex; flex-direction: column; align-items: flex-end; letter-spacing: .12px; }
```
